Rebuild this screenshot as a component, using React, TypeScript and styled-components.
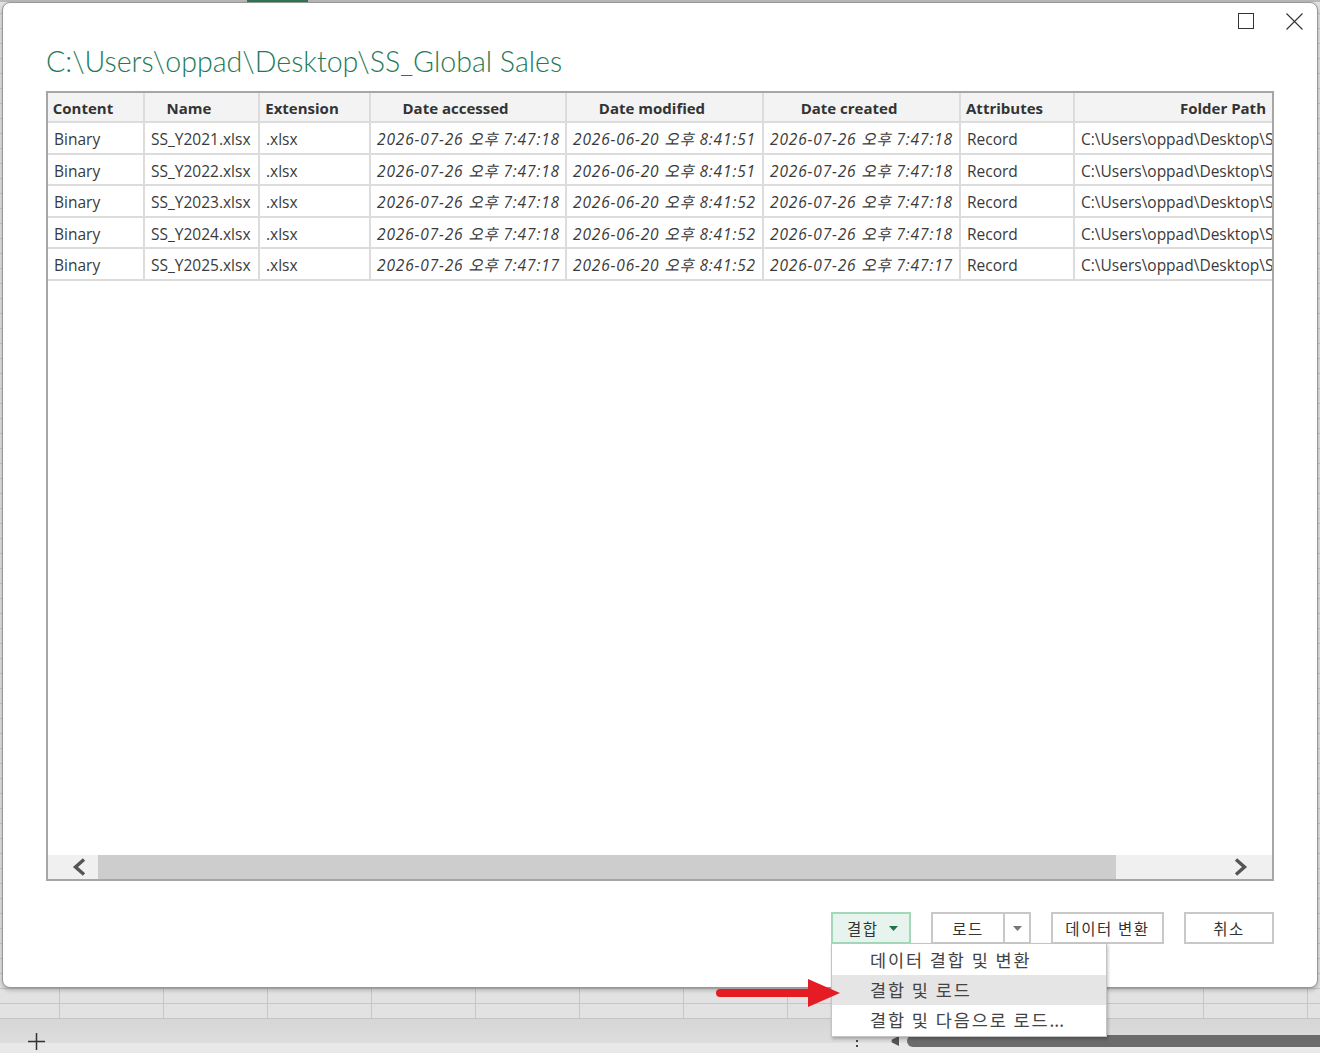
import styled, { createGlobalStyle } from "styled-components"

const GlobalStyle = createGlobalStyle`
  html, body {
    margin: 0;
    padding: 0;
  }
  body {
    width: 1320px;
    height: 1053px;
    overflow: hidden;
    background: #e3e3e3;
    font-family: "Open Sans", "Noto Sans CJK KR", sans-serif;
  }
  * {
    box-sizing: border-box;
  }
`

const Screen = styled.div`
  position: relative;
  width: 1320px;
  height: 1053px;
  overflow: hidden;
`

/* excel sheet behind the dialog */
const Sheet = styled.div`
  display: flex;
  flex-direction: column;
  height: 100%;
`

const TopStrip = styled.div`
  display: flex;
  height: 2px;
  background: #b9b9b9;
`

const ActiveTab = styled.div`
  margin-left: 247px;
  width: 61px;
  background: #2f7650;
`

const CellGrid = styled.div`
  flex: 1;
  background-color: #e2e2e2;
  background-image: linear-gradient(to right, #c6c6c6 1px, transparent 1px),
    linear-gradient(to bottom, #c6c6c6 1px, transparent 1px);
  background-size: 104px 15px;
  background-position: 59px 11px;
`

const TabBar = styled.div`
  display: flex;
  align-items: center;
  height: 35px;
  padding-top: 10px;
  border-top: 1px solid #c4c4c4;
  background: linear-gradient(#d6d6d6, #dddddd 70%, #e8e8e8 70%);
`

const PlusIcon = styled.svg`
  margin-left: 28px;
`

const SheetNav = styled.div`
  display: flex;
  align-items: center;
  margin-left: auto;
  width: 465px;
`

const VDots = styled.svg`
  margin-right: 32px;
`

const LeftNub = styled.svg`
  margin-right: 8px;
`

const DarkBar = styled.div`
  flex: 1;
  height: 12px;
  border-radius: 6px 0 0 6px;
  background: #6b6b6b;
`

/* dialog */
const Dialog = styled.div`
  position: absolute;
  left: 2px;
  top: 2px;
  width: 1316px;
  height: 986px;
  display: flex;
  flex-direction: column;
  background: #fff;
  border: 1px solid #979797;
  border-radius: 8px;
  box-shadow: 0 2px 4px rgba(0, 0, 0, 0.25);
`

const TitleBar = styled.div`
  display: flex;
  justify-content: flex-end;
  align-items: flex-start;
  gap: 32px;
  height: 36px;
  padding: 10px 14px 0 0;
`

const Body = styled.div`
  display: flex;
  flex-direction: column;
  flex: 1;
  padding: 0 43px 43px;
`

const Title = styled.h1`
  margin: 0;
  height: 40px;
  padding-top: 2px;
  line-height: 40px;
  font-family: "Lato", "Open Sans", sans-serif;
  font-weight: 300;
  font-size: 28.6px;
  color: #1e7a58;
  white-space: nowrap;
`

const TableFrame = styled.div`
  display: flex;
  flex-direction: column;
  height: 790px;
  margin-top: 12px;
  border: 2px solid #a6a6a6;
  overflow: hidden;
`

const TableBody = styled.div`
  flex: 1;
  overflow: hidden;
`

const HeadRow = styled.div`
  display: flex;
  height: 30px;
  background: #f3f3f3;
  border-bottom: 2px solid #dcdcdc;
`

const HeadCell = styled.div<{ $w: number }>`
  flex: 0 0 ${(p) => p.$w}px;
  padding: 2px 25px 0 0;
  border-right: 2px solid #dcdcdc;
  text-align: center;
  font-size: 15px;
  font-weight: 700;
  line-height: 26px;
  color: #333;
  white-space: nowrap;
`

const DataRow = styled.div<{ $tall: boolean }>`
  display: flex;
  height: ${(p) => (p.$tall ? 32 : 31)}px;
  border-bottom: 2px solid #dcdcdc;
`

const DataCell = styled.div<{ $w: number; $italic?: boolean }>`
  flex: 0 0 ${(p) => p.$w}px;
  padding: 3px 5px 0 6px;
  border-right: 2px solid #dcdcdc;
  font-size: 15.5px;
  font-style: ${(p) => (p.$italic ? "italic" : "normal")};
  letter-spacing: ${(p) => (p.$italic ? "0.85px" : "0")};
  line-height: 27px;
  color: #3a3a3a;
  white-space: nowrap;
  overflow: hidden;
`

const ScrollBar = styled.div`
  display: flex;
  height: 24px;
  background: #f0f0f0;
`

const ScrollButton = styled.div<{ $side: "left" | "right" }>`
  display: flex;
  align-items: center;
  justify-content: center;
  flex: 0 0 50px;
  padding-${(p) => p.$side}: 12px;
`

const Track = styled.div`
  flex: 1;
  display: flex;
`

const Thumb = styled.div`
  width: 1018px;
  background: #cdcdcd;
`

const Footer = styled.div`
  display: flex;
  justify-content: flex-end;
  margin-top: 31px;
  gap: 20px;
`

const btnText = `
  font-family: "Noto Sans CJK KR", "Open Sans", sans-serif;
  font-size: 15.5px;
  letter-spacing: 1.6px;
  color: #333;
`

const Button = styled.button<{ $w: number }>`
  width: ${(p) => p.$w}px;
  height: 32px;
  padding: 0;
  border: 2px solid #c8c8c8;
  background: #fff;
  ${btnText}
`

const CombineWrap = styled.div`
  position: relative;
`

const CombineButton = styled.button`
  display: flex;
  align-items: center;
  width: 80px;
  height: 32px;
  padding: 0 0 0 14px;
  gap: 10px;
  border: 2px solid #a3d8bb;
  background: #e7f3ed;
  ${btnText}
`

const SplitButton = styled.div`
  display: flex;
  width: 100px;
  height: 32px;
  border: 2px solid #c8c8c8;
  ${btnText}
`

const SplitMain = styled.div`
  flex: 1;
  display: flex;
  align-items: center;
  justify-content: center;
`

const SplitArrow = styled.div`
  display: flex;
  align-items: center;
  justify-content: center;
  flex: 0 0 26px;
  border-left: 2px solid #c8c8c8;
`

const Menu = styled.div`
  position: absolute;
  top: 31px;
  left: 0;
  width: 276px;
  padding: 1px 0;
  background: #fff;
  border: 1px solid #c4c4c4;
  box-shadow: 1px 2px 3px rgba(0, 0, 0, 0.25);
  z-index: 2;
`

const MenuItem = styled.div<{ $active?: boolean }>`
  height: 30px;
  padding-left: 38px;
  line-height: 30px;
  font-family: "Noto Sans CJK KR", sans-serif;
  font-size: 17.5px;
  letter-spacing: 1.9px;
  color: #444;
  background: ${(p) => (p.$active ? "#e5e5e5" : "transparent")};
  white-space: nowrap;
`

const Ellipsis = styled.span`
  letter-spacing: 0;
`

const Pointer = styled.svg`
  position: absolute;
  left: 712px;
  top: 976px;
  z-index: 3;
`

const columns = [
  { name: "Content", w: 97 },
  { name: "Name", w: 115 },
  { name: "Extension", w: 111 },
  { name: "Date accessed", w: 196 },
  { name: "Date modified", w: 197 },
  { name: "Date created", w: 197 },
  { name: "Attributes", w: 114 },
  { name: "Folder Path", w: 323 },
]

const files = [
  { year: "2021", accessed: "7:47:18", modified: "8:41:51", created: "7:47:18" },
  { year: "2022", accessed: "7:47:18", modified: "8:41:51", created: "7:47:18" },
  { year: "2023", accessed: "7:47:18", modified: "8:41:52", created: "7:47:18" },
  { year: "2024", accessed: "7:47:18", modified: "8:41:52", created: "7:47:18" },
  { year: "2025", accessed: "7:47:17", modified: "8:41:52", created: "7:47:17" },
]

const folder = "C:\\Users\\oppad\\Desktop\\SS_Global Sales"

const Triangle = ({ color }: { color: string }) => (
  <svg width="9" height="5" viewBox="0 0 9 5">
    <polygon points="0,0 9,0 4.5,5" fill={color} />
  </svg>
)

const App = () => {
  return (
    <Screen>
      <GlobalStyle />
      <Sheet>
        <TopStrip>
          <ActiveTab />
        </TopStrip>
        <CellGrid />
        <TabBar>
          <PlusIcon width="17" height="17" viewBox="0 0 17 17">
            <path d="M8.5 0v17M0 8.5h17" stroke="#333" strokeWidth="1.5" />
          </PlusIcon>
          <SheetNav>
            <VDots width="4" height="12" viewBox="0 0 4 12">
              <rect x="1" y="0" width="2" height="2" fill="#444" />
              <rect x="1" y="5" width="2" height="2" fill="#444" />
              <rect x="1" y="10" width="2" height="2" fill="#444" />
            </VDots>
            <LeftNub width="8" height="10" viewBox="0 0 8 10">
              <path d="M8 0v10L1 6.5Q0 5 1 3.5Z" fill="#555" />
            </LeftNub>
            <DarkBar />
          </SheetNav>
        </TabBar>
      </Sheet>

      <Dialog>
        <TitleBar>
          <svg width="16" height="16" viewBox="0 0 16 16">
            <rect x="0.5" y="0.5" width="15" height="15" fill="none" stroke="#333" />
          </svg>
          <svg width="17" height="17" viewBox="0 0 17 17">
            <path d="M0.5 0.5l16 16M16.5 0.5l-16 16" stroke="#333" strokeWidth="1.1" />
          </svg>
        </TitleBar>
        <Body>
          <Title>{folder}</Title>
          <TableFrame>
            <TableBody>
              <HeadRow>
                {columns.map((c) => (
                  <HeadCell key={c.name} $w={c.w}>
                    {c.name}
                  </HeadCell>
                ))}
              </HeadRow>
              {files.map((f, i) => (
                <DataRow key={f.year} $tall={i % 2 === 0}>
                  <DataCell $w={columns[0].w}>Binary</DataCell>
                  <DataCell $w={columns[1].w}>SS_Y{f.year}.xlsx</DataCell>
                  <DataCell $w={columns[2].w}>.xlsx</DataCell>
                  <DataCell $w={columns[3].w} $italic>
                    2026-07-26 오후 {f.accessed}
                  </DataCell>
                  <DataCell $w={columns[4].w} $italic>
                    2026-06-20 오후 {f.modified}
                  </DataCell>
                  <DataCell $w={columns[5].w} $italic>
                    2026-07-26 오후 {f.created}
                  </DataCell>
                  <DataCell $w={columns[6].w}>Record</DataCell>
                  <DataCell $w={columns[7].w}>{folder}\</DataCell>
                </DataRow>
              ))}
            </TableBody>
            <ScrollBar>
              <ScrollButton $side="left">
                <svg width="14" height="18" viewBox="0 0 14 18">
                  <path d="M12 1.5L3.5 9l8.5 7.5" fill="none" stroke="#555" strokeWidth="3.4" />
                </svg>
              </ScrollButton>
              <Track>
                <Thumb />
              </Track>
              <ScrollButton $side="right">
                <svg width="14" height="18" viewBox="0 0 14 18">
                  <path d="M2 1.5L10.5 9 2 16.5" fill="none" stroke="#555" strokeWidth="3.4" />
                </svg>
              </ScrollButton>
            </ScrollBar>
          </TableFrame>
          <Footer>
            <CombineWrap>
              <CombineButton>
                결합
                <Triangle color="#217346" />
              </CombineButton>
              <Menu>
                <MenuItem>데이터 결합 및 변환</MenuItem>
                <MenuItem $active>결합 및 로드</MenuItem>
                <MenuItem>
                  결합 및 다음으로 로드<Ellipsis>...</Ellipsis>
                </MenuItem>
              </Menu>
            </CombineWrap>
            <SplitButton>
              <SplitMain>로드</SplitMain>
              <SplitArrow>
                <Triangle color="#777" />
              </SplitArrow>
            </SplitButton>
            <Button $w={113}>데이터 변환</Button>
            <Button $w={90}>취소</Button>
          </Footer>
        </Body>
      </Dialog>

      <Pointer width="132" height="34" viewBox="0 0 132 34">
        <path d="M8 17H100" stroke="#e51c23" strokeWidth="8" strokeLinecap="round" />
        <polygon points="96,3 128,17 96,31" fill="#e51c23" />
      </Pointer>
    </Screen>
  )
}

export default App
